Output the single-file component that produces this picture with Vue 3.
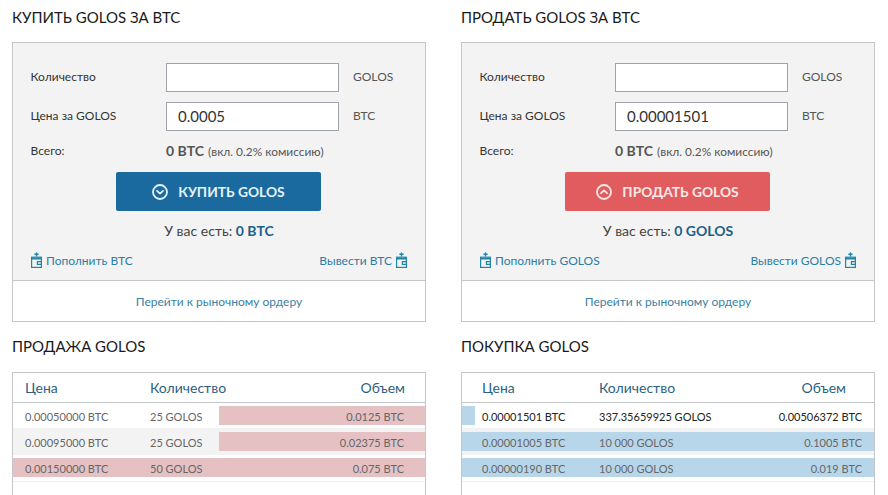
<script setup>
const sides = [
  {
    title: 'КУПИТЬ GOLOS ЗА BTC', price: '0.0005', action: 'КУПИТЬ GOLOS', kind: 'buy', have: '0 BTC',
    dep: 'Пополнить BTC', wd: 'Вывести BTC', book: 'ПРОДАЖА GOLOS', cls: 'sell',
    rows: [
      { p: '0.00050000 BTC', q: '25 GOLOS', v: '0.0125 BTC', w: 206 },
      { p: '0.00095000 BTC', q: '25 GOLOS', v: '0.02375 BTC', w: 206, alt: true },
      { p: '0.00150000 BTC', q: '50 GOLOS', v: '0.075 BTC', w: 412 },
    ],
  },
  {
    title: 'ПРОДАТЬ GOLOS ЗА BTC', price: '0.00001501', action: 'ПРОДАТЬ GOLOS', kind: 'sellbtn', have: '0 GOLOS',
    dep: 'Пополнить GOLOS', wd: 'Вывести GOLOS', book: 'ПОКУПКА GOLOS', cls: 'buyb',
    rows: [
      { p: '0.00001501 BTC', q: '337.35659925 GOLOS', v: '0.00506372 BTC', w: 13, strong: true },
      { p: '0.00001005 BTC', q: '10 000 GOLOS', v: '0.1005 BTC', w: 412, alt: true },
      { p: '0.00000190 BTC', q: '10 000 GOLOS', v: '0.019 BTC', w: 412 },
    ],
  },
]
</script>

<template>
  <div class="page">
    <section v-for="s in sides" :key="s.title" class="col" :class="s.cls">
      <h2 class="title">{{ s.title }}</h2>
      <div class="panel">
        <div class="form">
          <div class="line">
            <span class="lab">Количество</span>
            <input class="inp" type="text" value="" />
            <span class="unit">GOLOS</span>
          </div>
          <div class="line">
            <span class="lab">Цена за GOLOS</span>
            <input class="inp" type="text" :value="s.price" />
            <span class="unit">BTC</span>
          </div>
          <div class="line total">
            <span class="lab">Всего:</span>
            <span class="sum"><b>0 BTC</b> <small>(вкл. 0.2% комиссию)</small></span>
          </div>
          <button class="act" :class="s.kind" type="button">
            <svg class="ci" viewBox="0 0 16 16" width="16" height="16" fill="none" stroke="currentColor" stroke-width="1.8">
              <circle cx="8" cy="8" r="7" />
              <path v-if="s.kind === 'buy'" d="M5 6.8 8 9.6 11 6.8" stroke-linecap="round" stroke-linejoin="round" />
              <path v-else d="M5 9.2 8 6.4 11 9.2" stroke-linecap="round" stroke-linejoin="round" />
            </svg>
            <span>{{ s.action }}</span>
          </button>
          <p class="have">У вас есть: <b>{{ s.have }}</b></p>
          <div class="links">
            <a class="lnk">
              <svg class="wal" viewBox="0 0 11 16" width="11" height="16" fill="none" stroke="currentColor" stroke-width="1.2">
                <path d="M5.5 .4v4M3.4 2.2h4.2" stroke-width="1.4" />
                <rect x=".6" y="5.2" width="9.8" height="10.2" />
                <path d="M.6 6.6h9.8" stroke-width="1.8" />
                <path d="M10.4 9.6H6.4v2.8h4" />
              </svg>
              <span>{{ s.dep }}</span>
            </a>
            <a class="lnk">
              <span>{{ s.wd }}</span>
              <svg class="wal" viewBox="0 0 11 16" width="11" height="16" fill="none" stroke="currentColor" stroke-width="1.2">
                <path d="M5.5 .4v4M3.4 2.2h4.2" stroke-width="1.4" />
                <rect x=".6" y="5.2" width="9.8" height="10.2" />
                <path d="M.6 6.6h9.8" stroke-width="1.8" />
                <path d="M10.4 9.6H6.4v2.8h4" />
              </svg>
            </a>
          </div>
        </div>
        <div class="market"><a>Перейти к рыночному ордеру</a></div>
      </div>
      <h2 class="title second">{{ s.book }}</h2>
      <div class="book">
        <div class="row head">
          <span class="c1">Цена</span>
          <span class="c2">Количество</span>
          <span class="c3">Объем</span>
        </div>
        <div v-for="r in s.rows" :key="r.p" class="row data" :class="{ alt: r.alt, strong: r.strong }">
          <i class="bar" :style="{ width: r.w + 'px' }"></i>
          <span class="c1">{{ r.p }}</span>
          <span class="c2">{{ r.q }}</span>
          <span class="c3">{{ r.v }}</span>
        </div>
      </div>
    </section>
  </div>
</template>

<style>
html, body { margin: 0; background: #fff; overflow: hidden; }
</style>

<style scoped>
.page {
  display: flex;
  gap: 35px;
  padding: 0 12px;
  height: 495px;
  overflow: hidden;
  font-family: Lato, "Open Sans", sans-serif;
  color: #333;
}
.col { width: 414px; flex: none; }
.title {
  margin: 0;
  height: 42px;
  line-height: 34px;
  font-size: 15px;
  font-weight: 400;
  color: #1a1a1a;
}
.title.second { height: 50px; line-height: 48px; }
.panel { border: 1px solid #c4c7c9; height: 280px; box-sizing: border-box; display: flex; flex-direction: column; }
.form { background: #f3f3f3; height: 238px; padding: 20px 18px 0; box-sizing: border-box; border-bottom: 1px solid #c4c7c9; }
.line { display: flex; align-items: center; height: 29px; margin-bottom: 10px; }
.lab { width: 135px; font-size: 12px; line-height: 26px; margin-bottom: 2px; margin-left: -0.5px; padding-right: 0.5px; color: #333; flex: none; }
.inp {
  width: 173px; height: 29px; box-sizing: border-box;
  border: 1px solid #9da3a8; background: #fff;
  padding: 0 11px 2px; font: 15px Lato, sans-serif; color: #333; flex: none; outline: none; border-radius: 0;
}
.unit { margin-left: 14px; margin-bottom: 2px; font-size: 12px; color: #555; }
.total { height: 20px; margin: -1px 0 0; }
.total .lab { margin-bottom: -2px; }
.sum { margin-bottom: 2px; }
.sum b { font-size: 14px; font-weight: 700; color: #555; }
.sum small { font-size: 11.9px; color: #555; }
.act {
  display: flex; align-items: center; justify-content: center; gap: 10px;
  width: 205px; height: 39px; margin: 12px 0 0 85px; border: 0; border-radius: 2px;
  font: 700 13.8px Lato, sans-serif; color: #fff; padding: 0;
}
.act.buy { background: #1a699f; color: #e6f3fb; }
.act.sellbtn { background: #e05c5f; color: #fde9e7; }
.have { margin: 11px 0 0; text-align: center; font-size: 14px; line-height: 18px; color: #444; }
.have b { color: #1d5f88; font-weight: 700; }
.links { display: flex; justify-content: space-between; margin-top: 12px; }
.lnk { display: flex; align-items: center; gap: 4px; font-size: 12px; color: #2b7da6; }
.wal { color: #1f86a8; }
.market { flex: 1; display: flex; align-items: center; justify-content: center; font-size: 12px; color: #3b7fa3; }
.book { border: 1px solid #c4c7c9; height: 150px; box-sizing: border-box; }
.row { position: relative; display: flex; align-items: center; }
.head { height: 29px; border-bottom: 1px solid #c4c7c9; font-size: 14px; color: #2d5f80; box-sizing: content-box; }
.data { height: 26px; font-size: 11px; color: #666; }
.data:last-child { border-bottom: 1px solid #f0f0f0; }
.data.alt { background: #f3f3f3; height: 27px; margin-top: -1px; padding-top: 1px; box-sizing: border-box; }
.data.strong { color: #222; }
.bar { position: absolute; top: 3px; height: 19px; }
.data.alt .bar { top: 4px; }
.sell .bar { right: 0; background: #e5c1c3; }
.buyb .bar { left: 0; background: #b8d6ea; }
.c1, .c2, .c3 { position: relative; }
.c1 { width: 137px; padding-left: 12px; box-sizing: border-box; }
.c2 { width: 150px; }
.c3 { flex: 1; text-align: right; padding-right: 20px; }
.sell .data .c3 { padding-right: 21px; }
.buyb .c1 { padding-left: 20px; }
.buyb .c3 { padding-right: 12px; }
.buyb .head .c3 { padding-right: 28px; }
</style>
